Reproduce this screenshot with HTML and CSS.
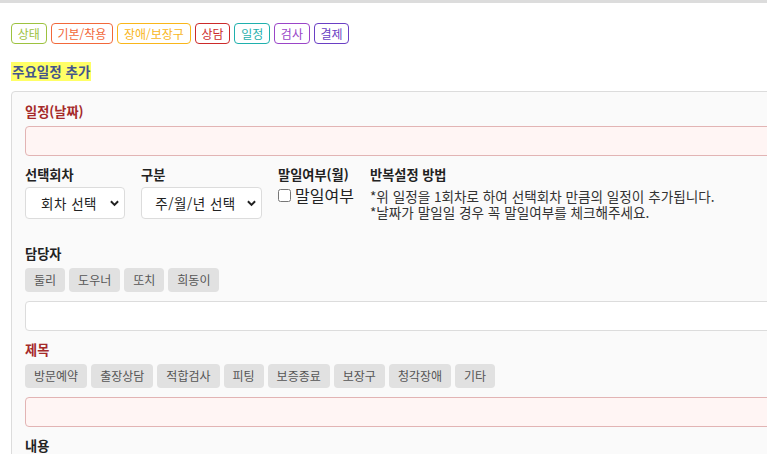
FILE: index.html
```html
<!DOCTYPE html>
<html lang="ko">
<head>
<meta charset="utf-8">
<title>주요일정 추가</title>
<link rel="stylesheet" href="styles.css">
</head>
<body>
<div class="topbar"></div>
<div class="page">
  <div class="tags">
    <button class="tag t-state">상태</button>
    <button class="tag t-basic">기본/착용</button>
    <button class="tag t-dis">장애/보장구</button>
    <button class="tag t-consult">상담</button>
    <button class="tag t-sched">일정</button>
    <button class="tag t-test">검사</button>
    <button class="tag t-pay">결제</button>
  </div>
  <h2 class="title"><span>주요일정 추가</span></h2>
  <div class="card">
    <div class="field">
      <label class="lbl req">일정(날짜)</label>
      <input class="inp pink" type="text">
    </div>
    <div class="row">
      <div class="col">
        <label class="lbl">선택회차</label>
        <select class="sel sel1"><option>회차 선택</option></select>
      </div>
      <div class="col">
        <label class="lbl">구분</label>
        <select class="sel sel2"><option>주/월/년 선택</option></select>
      </div>
      <div class="col col-chk">
        <label class="lbl">말일여부(월)</label>
        <label class="chk"><input type="checkbox"><span>말일여부</span></label>
      </div>
      <div class="col">
        <label class="lbl">반복설정 방법</label>
        <p class="note">*위 일정을 1회차로 하여 선택회차 만큼의 일정이 추가됩니다.<br>*날짜가 말일일 경우 꼭 말일여부를 체크해주세요.</p>
      </div>
    </div>
    <div class="field">
      <label class="lbl">담당자</label>
      <div class="chips">
        <button class="chip">둘리</button>
        <button class="chip">도우너</button>
        <button class="chip">또치</button>
        <button class="chip">희동이</button>
      </div>
      <input class="inp" type="text">
    </div>
    <div class="field">
      <label class="lbl req">제목</label>
      <div class="chips">
        <button class="chip">방문예약</button>
        <button class="chip">출장상담</button>
        <button class="chip">적합검사</button>
        <button class="chip">피팅</button>
        <button class="chip">보증종료</button>
        <button class="chip">보장구</button>
        <button class="chip">청각장애</button>
        <button class="chip">기타</button>
      </div>
      <input class="inp pink" type="text">
    </div>
    <div class="field">
      <label class="lbl">내용</label>
      <textarea class="inp area"></textarea>
    </div>
  </div>
</div>
</body>
</html>
```
FILE: styles.css
```css
html, body {
  margin: 0;
  padding: 0;
  overflow: hidden;
  background: #fff;
}
body {
  font-family: "Noto Sans CJK KR", "Noto Sans", sans-serif;
  color: #222;
  width: 767px;
  height: 454px;
}
.topbar {
  height: 3px;
  background: #dcdcdc;
}
.page {
  padding: 20px 0 0 11px;
}
.tags {
  display: flex;
  gap: 4px;
  height: 21px;
}
.tag {
  font-family: inherit;
  font-size: 12px;
  line-height: 19px;
  height: 21px;
  padding: 0 5.8px;
  background: #fff;
  border: 1px solid currentColor;
  border-radius: 4px;
  cursor: pointer;
}
.t-state { color: #9dc23f; }
.t-basic { color: #f2683a; }
.t-dis { color: #f9b61a; }
.t-consult { color: #cc2a2a; }
.t-sched { color: #1fb0ad; }
.t-test { color: #9a45c8; }
.t-pay { color: #6a3fc4; }

.title {
  margin: 18px 0 10px;
  font-size: 13.5px;
  line-height: 19px;
  font-weight: 700;
  color: #44558c;
}
.title span {
  background: #ffff66;
  padding: 0 1px;
  display: inline-block;
}
.card {
  width: 1100px;
  background: #fafafa;
  border: 1px solid #dcdcdc;
  border-radius: 4px;
  padding: 11px 13px;
}
.field {
  margin-bottom: 10px;
}
.lbl {
  display: block;
  font-size: 13.2px;
  font-weight: 700;
  line-height: 18px;
  margin-bottom: 5px;
  color: #222;
}
.lbl.req { color: #a52a2a; }
.inp {
  display: block;
  box-sizing: border-box;
  width: 100%;
  height: 30px;
  border: 1px solid #dcdcdc;
  border-radius: 4px;
  background: #fff;
  font-family: inherit;
}
.inp.pink {
  background: #fff5f4;
  border-color: #e2b4b4;
}
.row {
  display: flex;
  gap: 16px;
  margin-bottom: 25px;
}
.col .lbl { margin-bottom: 3px; }
.col-chk { width: 76px; flex: none; }
.sel {
  appearance: none;
  -webkit-appearance: none;
  display: block;
  box-sizing: border-box;
  height: 32px;
  border: 1px solid #dcdcdc;
  border-radius: 4px;
  background-color: #fff;
  background-image: url("data:image/svg+xml,%3Csvg xmlns='http://www.w3.org/2000/svg' viewBox='0 0 10 7'%3E%3Cpath d='M1 1l4 4 4-4' fill='none' stroke='%23222' stroke-width='2.2'/%3E%3C/svg%3E");
  background-repeat: no-repeat;
  background-position: right 5px center;
  background-size: 9px 7px;
  font-family: inherit;
  font-size: 13.5px;
  color: #222;
  text-align: center;
  text-align-last: center;
  padding: 0 16px 0 4px;
  letter-spacing: 0.5px;
}
.sel1 { width: 100px; }
.sel2 { width: 121px; }
.chk {
  display: flex;
  align-items: center;
  gap: 4px;
  font-size: 16px;
  line-height: 17px;
  color: #222;
  white-space: nowrap;
}
.chk input {
  margin: 0;
  width: 13px;
  height: 13px;
}
.note {
  margin: 0;
  font-size: 13.6px;
  line-height: 16px;
  color: #333;
  padding-top: 1px;
  white-space: nowrap;
}
.chips {
  display: flex;
  gap: 4px;
  margin-bottom: 9px;
  margin-top: 1px;
}
.chip {
  font-family: inherit;
  font-size: 12px;
  line-height: 24px;
  height: 24px;
  padding: 0 9px;
  border: none;
  border-radius: 4px;
  background: #e1e1e1;
  color: #555;
}
.area {
  height: 60px;
  resize: none;
}
```
